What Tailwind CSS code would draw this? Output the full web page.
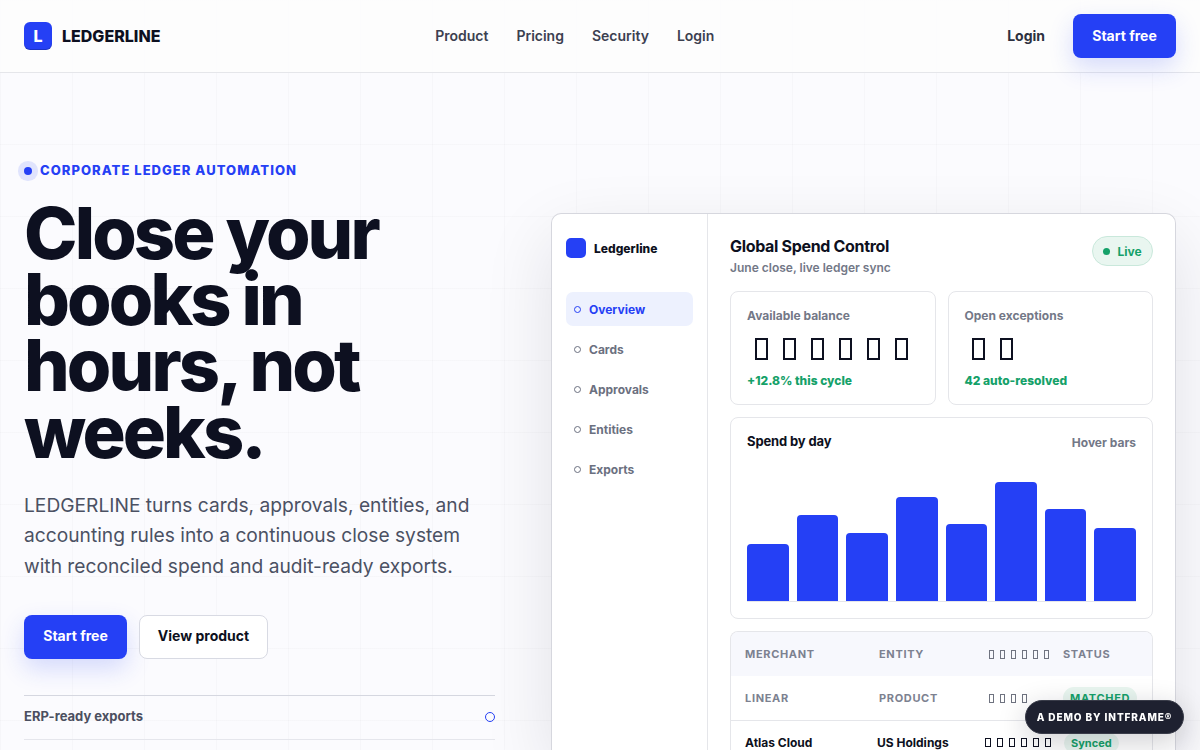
<!DOCTYPE html>
<html lang="en">

<head>
    <meta charset="utf-8">
    <meta name="viewport" content="width=device-width, initial-scale=1.0">
    <title>LEDGERLINE</title>
    <script src="https://cdn.jsdelivr.net/npm/@tailwindcss/browser@4"></script>
</head>

<body class="h-screen overflow-hidden bg-[#fbfbfe] font-['Inter',sans-serif] text-[#0d1020] antialiased bg-[linear-gradient(90deg,rgba(13,16,32,0.02)_1px,transparent_1px),linear-gradient(rgba(13,16,32,0.02)_1px,transparent_1px)] bg-[size:72px_72px]">
    <header class="flex h-[73px] items-center justify-between border-b border-[#e5e6ea] bg-[#fdfdfd]/90 px-6">
        <a href="#" class="flex items-center gap-2.5">
            <span class="flex size-7 items-center justify-center rounded-md bg-[#2540f5] text-base font-extrabold text-white shadow-[inset_0_-1px_0_rgba(0,0,0,0.2)]">L</span>
            <span class="text-base font-extrabold">LEDGERLINE</span>
        </a>
        <nav class="flex gap-7 text-sm font-[580] text-[#3c4050]">
            <a href="#">Product</a>
            <a href="#">Pricing</a>
            <a href="#">Security</a>
            <a href="#">Login</a>
        </nav>
        <div class="flex items-center gap-2.5 text-sm">
            <a href="#" class="px-[18px] font-[680] text-[#2d3140]">Login</a>
            <a href="#" class="flex h-11 w-[103px] items-center justify-center rounded-lg bg-[#2540f5] font-bold text-white shadow-[0_10px_24px_rgba(37,64,245,0.18)]">Start free</a>
        </div>
    </header>

    <main class="grid grid-cols-[471px_625px] gap-14 px-6">
        <section class="pt-[89px]">
            <div class="flex h-[18px] items-center gap-2 text-[13px] font-[760] tracking-[1.04px] text-[#2540f5]">
                <span class="size-2 rounded-full bg-[#2540f5] shadow-[0_0_0_6px_rgba(37,64,245,0.12)]"></span>
                CORPORATE LEDGER AUTOMATION
            </div>
            <h1 class="mt-5 text-[72px] leading-[66.24px] font-[780] tracking-[-2.88px]">Close your<br>books in<br>hours, not<br>weeks.</h1>
            <p class="mt-[25px] text-[19.2px] leading-[30.4px] text-[#4b5163]">LEDGERLINE turns cards, approvals, entities, and<br>accounting rules into a continuous close system<br>with reconciled spend and audit-ready exports.</p>
            <div class="mt-[34px] flex gap-3 text-sm font-bold">
                <a href="#" class="flex h-11 w-[103px] items-center justify-center rounded-lg bg-[#2540f5] pb-0.5 text-white shadow-[0_10px_24px_rgba(37,64,245,0.18)]">Start free</a>
                <a href="#" class="flex h-11 w-[129px] items-center justify-center rounded-lg border border-[#d8dae3] bg-white pb-0.5">View product</a>
            </div>
            <div class="mt-9 border-t border-[#d5d7e0]">
                <div class="flex h-11 items-center justify-between border-b border-[#e5e6ec] pb-px text-[13px] font-[650] text-[#4b4f60]">
                    <span>ERP-ready exports</span>
                    <span class="size-2.5 rounded-full border border-[#2540f5]"></span>
                </div>
            </div>
        </section>

        <section class="mt-[140px] flex h-[537px] overflow-hidden rounded-t-[10px] border border-b-0 border-[#d6d7de] bg-white shadow-[0_24px_70px_rgba(13,16,32,0.11)]">
            <aside class="w-[156px] shrink-0 border-r border-[#e5e6ea] px-3.5 pt-6">
                <div class="flex h-5 items-center gap-2 text-xs font-extrabold">
                    <span class="size-5 rounded-[5px] bg-[#2540f5]"></span>
                    <span class="pt-0.5">Ledgerline</span>
                </div>
                <ul class="mt-[34px] flex flex-col gap-1.5 text-xs font-[650] text-[#6b7080]">
                    <li class="flex h-[34px] items-center gap-2 rounded-[7px] bg-[#edf1fe] px-2 text-[#2540f5]"><span class="size-[7px] rounded-full border border-current"></span><span class="pt-0.5">Overview</span></li>
                    <li class="flex h-[34px] items-center gap-2 px-2"><span class="size-[7px] rounded-full border border-current"></span><span class="pt-0.5">Cards</span></li>
                    <li class="flex h-[34px] items-center gap-2 px-2"><span class="size-[7px] rounded-full border border-current"></span><span class="pt-0.5">Approvals</span></li>
                    <li class="flex h-[34px] items-center gap-2 px-2"><span class="size-[7px] rounded-full border border-current"></span><span class="pt-0.5">Entities</span></li>
                    <li class="flex h-[34px] items-center gap-2 px-2"><span class="size-[7px] rounded-full border border-current"></span><span class="pt-0.5">Exports</span></li>
                </ul>
            </aside>

            <div class="flex-1 px-[22px] pt-[22px]">
                <div class="flex h-[55px] items-start justify-between">
                    <div>
                        <h2 class="text-base leading-5 font-bold tracking-[-0.32px]">Global Spend Control</h2>
                        <p class="mt-0.5 text-xs leading-5 font-[600] text-[#737887]">June close, live ledger sync</p>
                    </div>
                    <span class="flex h-[30px] w-[61px] items-center justify-center gap-[7px] rounded-full border border-[#c9e8db] bg-[#e9f6f0] text-xs font-bold text-[#15a169]"><span class="size-[7px] rounded-full bg-[#15a169]"></span><span class="pt-0.5">Live</span></span>
                </div>

                <div class="grid grid-cols-2 gap-3">
                    <div class="h-[114px] rounded-lg border border-[#e5e6ea] px-4 pt-4">
                        <p class="text-xs leading-4 font-[650] text-[#737887]">Available balance</p>
                        <div class="mt-3.5 flex h-[22px] gap-[15px] pl-2">
                            <i class="w-[13px] border-2 border-[#0d1020]"></i><i class="w-[13px] border-2 border-[#0d1020]"></i><i class="w-[13px] border-2 border-[#0d1020]"></i><i class="w-[13px] border-2 border-[#0d1020]"></i><i class="w-[13px] border-2 border-[#0d1020]"></i><i class="w-[13px] border-2 border-[#0d1020]"></i>
                        </div>
                        <p class="mt-[13px] text-xs leading-4 font-extrabold text-[#15a169]">+12.8% this cycle</p>
                    </div>
                    <div class="h-[114px] rounded-lg border border-[#e5e6ea] px-4 pt-4">
                        <p class="text-xs leading-4 font-[650] text-[#737887]">Open exceptions</p>
                        <div class="mt-3.5 flex h-[22px] gap-[15px] pl-[7px]">
                            <i class="w-[13px] border-2 border-[#0d1020]"></i><i class="w-[13px] border-2 border-[#0d1020]"></i>
                        </div>
                        <p class="mt-[13px] text-xs leading-4 font-extrabold text-[#15a169]">42 auto-resolved</p>
                    </div>
                </div>

                <div class="mt-3 h-[202px] rounded-lg border border-[#e5e6ea] px-4 pt-3.5">
                    <div class="flex h-5 justify-between">
                        <h3 class="text-[13px] leading-[19px] font-bold tracking-[-0.13px]">Spend by day</h3>
                        <span class="pt-px text-xs leading-5 font-[650] text-[#737887]">Hover bars</span>
                    </div>
                    <div class="mt-[15px] flex h-[135px] items-end gap-2 border-b border-[#e5e6ea]">
                        <div class="flex-1 rounded-t bg-[#2540f5]" style="height: 57px"></div>
                        <div class="flex-1 rounded-t bg-[#2540f5]" style="height: 86px"></div>
                        <div class="flex-1 rounded-t bg-[#2540f5]" style="height: 68px"></div>
                        <div class="flex-1 rounded-t bg-[#2540f5]" style="height: 104px"></div>
                        <div class="flex-1 rounded-t bg-[#2540f5]" style="height: 77px"></div>
                        <div class="flex-1 rounded-t bg-[#2540f5]" style="height: 119px"></div>
                        <div class="flex-1 rounded-t bg-[#2540f5]" style="height: 92px"></div>
                        <div class="flex-1 rounded-t bg-[#2540f5]" style="height: 73px"></div>
                    </div>
                </div>

                <div class="mt-3 overflow-hidden rounded-t-lg border border-b-0 border-[#e5e6ea]">
                    <div class="grid h-11 grid-cols-[134px_107px_77px_1fr] items-center bg-[#f7f8fd] pl-3.5 text-[11px] font-[680] tracking-[0.66px] text-[#7c8190]">
                        <span>MERCHANT</span>
                        <span>ENTITY</span>
                        <span class="flex h-[9px] gap-1.5 pl-[3px]">
                            <i class="w-[5px] border border-[#6f7380]"></i><i class="w-[5px] border border-[#6f7380]"></i><i class="w-[5px] border border-[#6f7380]"></i><i class="w-[5px] border border-[#6f7380]"></i><i class="w-[5px] border border-[#6f7380]"></i><i class="w-[5px] border border-[#6f7380]"></i>
                        </span>
                        <span>STATUS</span>
                    </div>
                    <div class="grid h-[45px] grid-cols-[134px_107px_77px_1fr] items-center border-b border-[#e5e6ea] pl-3.5 text-[11px] font-[680] tracking-[0.66px] text-[#7c8190]">
                        <span>LINEAR</span>
                        <span>PRODUCT</span>
                        <span class="flex h-[9px] gap-1.5 pl-[3px]">
                            <i class="w-[5px] border border-[#6f7380]"></i><i class="w-[5px] border border-[#6f7380]"></i><i class="w-[5px] border border-[#6f7380]"></i><i class="w-[5px] border border-[#6f7380]"></i>
                        </span>
                        <span class="w-fit rounded-full bg-[#e9f6f0] px-[7px] py-[3px] font-bold text-[#15a169]">MATCHED</span>
                    </div>
                    <div class="grid h-11 grid-cols-[132px_105px_82px_1fr] items-center pl-3.5 text-xs font-[680]">
                        <span>Atlas Cloud</span>
                        <span>US Holdings</span>
                        <span class="mb-0.5 flex h-[9px] gap-1.5 pl-[3px]">
                            <i class="w-1.5 border border-[#0d1020]"></i><i class="w-1.5 border border-[#0d1020]"></i><i class="w-1.5 border border-[#0d1020]"></i><i class="w-1.5 border border-[#0d1020]"></i><i class="w-1.5 border border-[#0d1020]"></i><i class="w-1.5 border border-[#0d1020]"></i>
                        </span>
                        <span class="w-fit rounded-full bg-[#e9f6f0] px-[7px] py-[3px] text-[11px] font-bold text-[#15a169]">Synced</span>
                    </div>
                </div>
            </div>
        </section>
    </main>

    <a href="#" class="fixed right-4 bottom-4 flex h-[34px] w-[159px] items-center justify-center rounded-full border border-[#393c49] bg-[#1e2130] text-[10px] font-extrabold tracking-[0.9px] text-white shadow-[0_8px_30px_rgba(13,16,32,0.2)]">A DEMO BY INTFRAME®</a>
</body>

</html>
